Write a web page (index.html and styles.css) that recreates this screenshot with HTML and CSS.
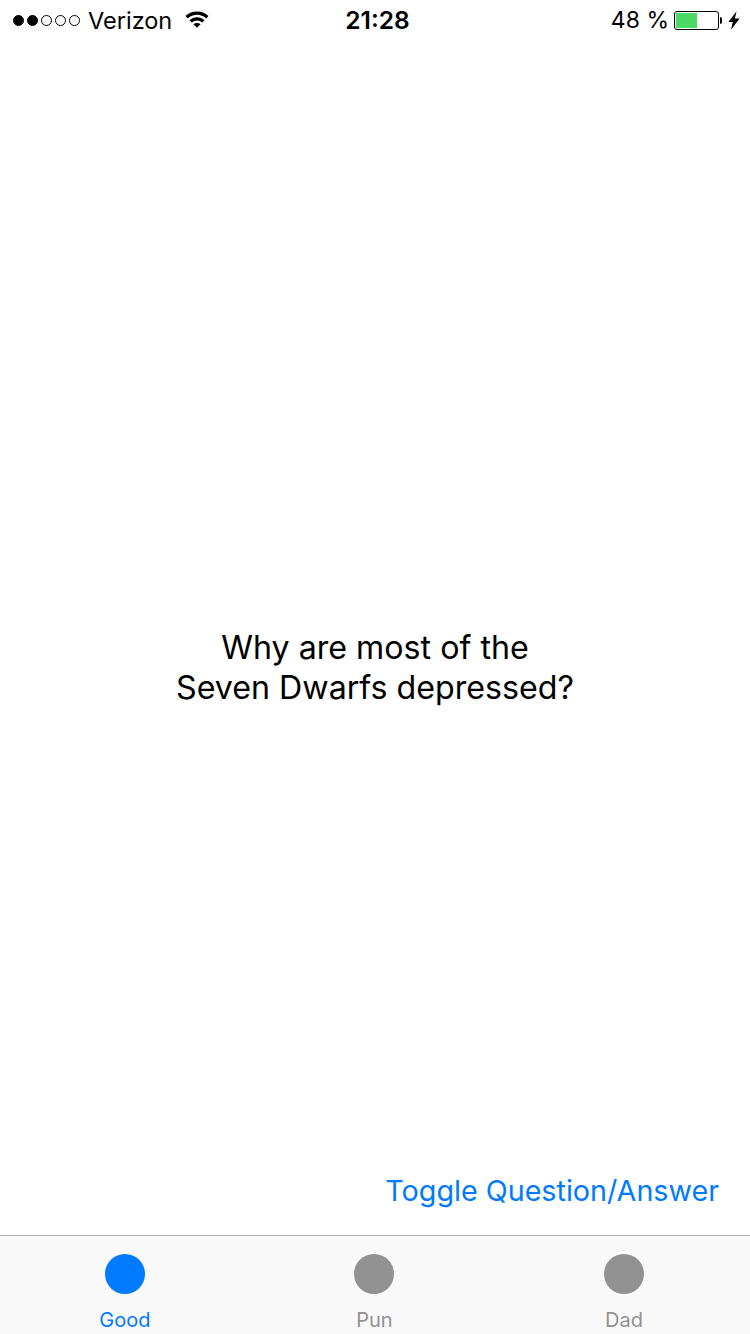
FILE: index.html
```html
<!DOCTYPE html>
<html lang="en">
<head>
    <meta charset="UTF-8">
    <meta name="viewport" content="width=device-width, initial-scale=1.0">
    <title>Jokes</title>
    <link rel="stylesheet" href="styles.css">
</head>
<body>

    <div class="status-bar">
        <div class="status-left">
            <div class="signal">
                <span class="dot full"></span>
                <span class="dot full"></span>
                <span class="dot"></span>
                <span class="dot"></span>
                <span class="dot"></span>
            </div>
            <span class="carrier">Verizon</span>
            <svg class="wifi" width="24" height="18" viewBox="0 0 24 18">
                <path d="M0.5 6C6.8 .1 17.2 .1 23.5 6L21.3 8.4C16 3.4 8 3.4 2.7 8.4Z" fill="#000"/>
                <path d="M4.5 10.2C8.8 6.3 15.2 6.3 19.5 10.2L17.2 12.6C14 9.7 10 9.7 6.8 12.6Z" fill="#000"/>
                <path d="M8.4 14.2C10.4 12.6 13.6 12.6 15.6 14.2L12 17.8Z" fill="#000"/>
            </svg>
        </div>
        <div class="clock">21:28</div>
        <div class="status-right">
            <span class="percent">48 %</span>
            <div class="battery"><div class="battery-level"></div></div>
            <div class="battery-tip"></div>
            <svg class="bolt" width="12" height="19" viewBox="0 0 12 19">
                <path d="M8.6 0.3L0.4 11H4.8L3 18.8L11.6 7.4H6.8Z" fill="#000"/>
            </svg>
        </div>
    </div>

    <div class="content">
        <p class="joke">Why are most of the<br>Seven Dwarfs depressed?</p>
    </div>

    <div class="toggle-row">
        <a class="toggle">Toggle Question/Answer</a>
    </div>

    <div class="tab-bar">
        <div class="tab active">
            <span class="tab-icon"></span>
            <span class="tab-label">Good</span>
        </div>
        <div class="tab">
            <span class="tab-icon"></span>
            <span class="tab-label">Pun</span>
        </div>
        <div class="tab">
            <span class="tab-icon"></span>
            <span class="tab-label">Dad</span>
        </div>
    </div>

</body>
</html>
```

FILE: styles.css
```css
html, body {
    height: 100%;
}
body {
    margin: 0;
    height: 1334px;
    overflow: hidden;
    display: flex;
    flex-direction: column;
    background-color: white;
    color: black;
    font-family: Inter, "Liberation Sans", Arial, sans-serif;
}
.status-bar {
    height: 40px;
    padding: 0 10px 0 13px;
    display: flex;
    align-items: center;
    justify-content: space-between;
    position: relative;
    font-size: 23.5px;
}
.status-left {
    display: flex;
    align-items: center;
}
.signal {
    display: flex;
    gap: 3px;
}
.dot {
    width: 11px;
    height: 11px;
    box-sizing: border-box;
    border: 1px solid black;
    border-radius: 50%;
}
.dot.full {
    background: black;
}
.carrier {
    margin-left: 8px;
}
.wifi {
    margin-left: 13px;
    margin-top: -2px;
}
.clock {
    position: absolute;
    left: 5px;
    right: 0;
    text-align: center;
    font-size: 24.5px;
    font-weight: 600;
}
.status-right {
    display: flex;
    align-items: center;
}
.percent {
    font-size: 23px;
}
.battery {
    width: 45px;
    height: 19px;
    box-sizing: border-box;
    margin-left: 5px;
    padding: 1px;
    border: 1px solid black;
    border-radius: 3px;
}
.battery-level {
    width: 21px;
    height: 15px;
    background: #4cd964;
}
.battery-tip {
    width: 2px;
    height: 7px;
    margin-left: 1px;
    background: black;
    border-radius: 0 2px 2px 0;
}
.bolt {
    margin-left: 6px;
}
.content {
    flex: 1;
    padding-top: 588px;
}
.joke {
    margin: 0;
    text-align: center;
    font-size: 32.2px;
    line-height: 40px;
}
.toggle-row {
    height: 62px;
    padding-right: 31px;
    text-align: right;
}
.toggle {
    color: #007aff;
    font-size: 28.7px;
    line-height: 36px;
}
.tab-bar {
    height: 99px;
    box-sizing: border-box;
    padding-right: 1.2px;
    border-top: 1px solid #b2b2b2;
    background: #f9f9f9;
    display: flex;
}
.tab {
    flex: 1;
    padding-top: 18px;
    display: flex;
    flex-direction: column;
    align-items: center;
    color: #929292;
}
.tab-icon {
    width: 40px;
    height: 40px;
    border-radius: 50%;
    background: #929292;
}
.tab-label {
    margin-top: 14px;
    font-size: 20px;
    line-height: 24px;
}
.tab.active {
    color: #007aff;
}
.tab.active .tab-icon {
    background: #007aff;
}
```
